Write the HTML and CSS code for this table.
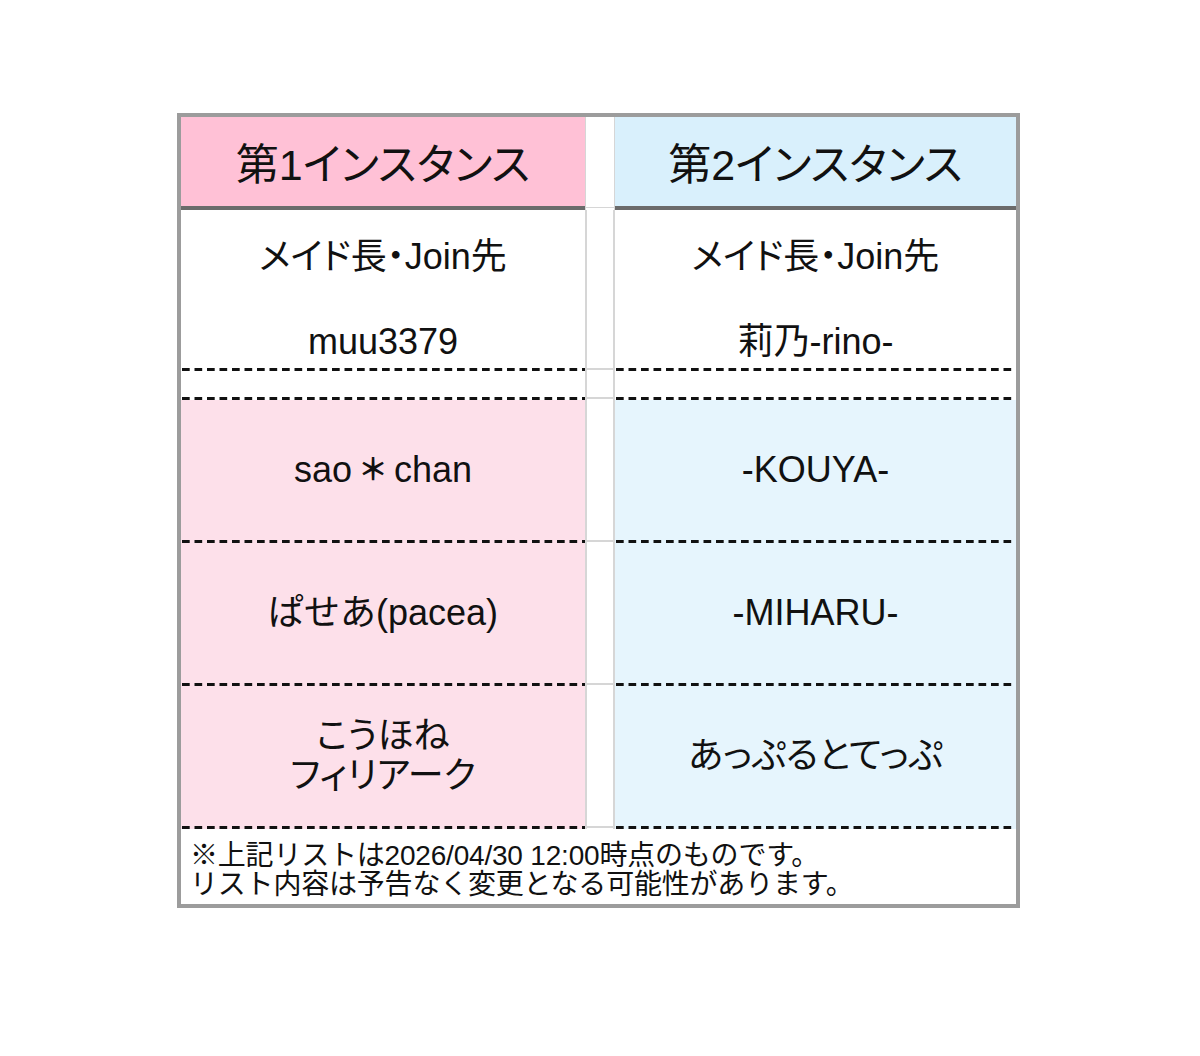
FILE: index.html
```html
<!DOCTYPE html>
<html lang="ja">
<head>
<meta charset="utf-8">
<title>インスタンス</title>
<link rel="stylesheet" href="styles.css">
</head>
<body>
<div class="page">
  <div class="board">
    <div class="cell head pink-h">第1インスタンス</div>
    <div class="gap head-gap"></div>
    <div class="cell head blue-h">第2インスタンス</div>

    <div class="cell lead dash"><div>メイド長・Join先</div><div>muu3379</div></div>
    <div class="gap gap-line"></div>
    <div class="cell lead dash"><div>メイド長・Join先</div><div>莉乃-rino-</div></div>

    <div class="cell spacer dash"></div>
    <div class="gap gap-line"></div>
    <div class="cell spacer dash"></div>

    <div class="cell row pink dash">sao<span class="star">＊</span>chan</div>
    <div class="gap gap-line"></div>
    <div class="cell row blue dash">-KOUYA-</div>

    <div class="cell row pink dash wide">ぱせあ(pacea)</div>
    <div class="gap gap-line"></div>
    <div class="cell row blue dash">-MIHARU-</div>

    <div class="cell row pink dash">こうほね<br>フィリアーク</div>
    <div class="gap gap-line"></div>
    <div class="cell row blue dash">あっぷるとてっぷ</div>

    <div class="note">※上記リストは2026/04/30 12:00時点のものです。<br>リスト内容は予告なく変更となる可能性があります。</div>
  </div>
</div>
</body>
</html>
```
FILE: styles.css
```css
html, body {
  margin: 0;
  padding: 0;
  background: #ffffff;
}
body {
  font-family: "Liberation Sans", "Noto Sans CJK JP", sans-serif;
  font-feature-settings: "palt";
  color: #111111;
}
.page {
  padding: 113px 0 0 177px;
}
.board {
  width: 835px;
  border: 4px solid #9c9c9c;
  display: grid;
  grid-template-columns: 404px 30px 401px;
  grid-template-rows: 93px 161px 29px 143px 143px 143px 75px;
  background: #ffffff;
}
.cell {
  display: flex;
  align-items: center;
  justify-content: center;
  text-align: center;
  font-size: 36px;
  box-sizing: border-box;
}
.head {
  font-size: 43px;
  border-bottom: 4px solid #6b6b6b;
  padding-bottom: 2px;
}
.pink-h { background: #ffc1d6; }
.blue-h { background: #d9f0fc; }
.gap {
  border-left: 2px solid #d6d6d6;
  border-right: 2px solid #d6d6d6;
  box-sizing: border-box;
}
.head-gap {
  border-left-width: 1px;
  border-right-width: 1px;
  background: linear-gradient(#d6d6d6, #d6d6d6) 0 calc(100% - 2px) / 100% 1px no-repeat, #ffffff;
}
.gap-line {
  background: linear-gradient(#d6d6d6, #d6d6d6) 0 calc(100% - 1px) / 100% 2px no-repeat, #ffffff;
}
.dash {
  background: linear-gradient(to right, #111111 8px, transparent 8px) 1px 100% / 12.5px 3px repeat-x;
}
.lead {
  flex-direction: column;
  justify-content: flex-start;
  padding-top: 22px;
  gap: 35px;
  line-height: 50px;
  font-size: 36px;
}
.pink.dash {
  background: linear-gradient(to right, #111111 8px, transparent 8px) 1px 100% / 12.5px 3px repeat-x, #fde0ea;
}
.blue.dash {
  background: linear-gradient(to right, #111111 8px, transparent 8px) 1px 100% / 12.5px 3px repeat-x, #e6f5fd;
}
.row { line-height: 40px; padding-bottom: 3px; }
.wide { font-feature-settings: normal; }
.star {
  font-feature-settings: normal;
  font-weight: 700;
  font-size: 30px;
  margin: 0 6px;
}
.note {
  grid-column: 1 / 4;
  font-size: 28px;
  line-height: 29px;
  padding: 12px 0 0 9px;
  text-align: left;
  font-feature-settings: normal;
  letter-spacing: -0.2px;
}
```
